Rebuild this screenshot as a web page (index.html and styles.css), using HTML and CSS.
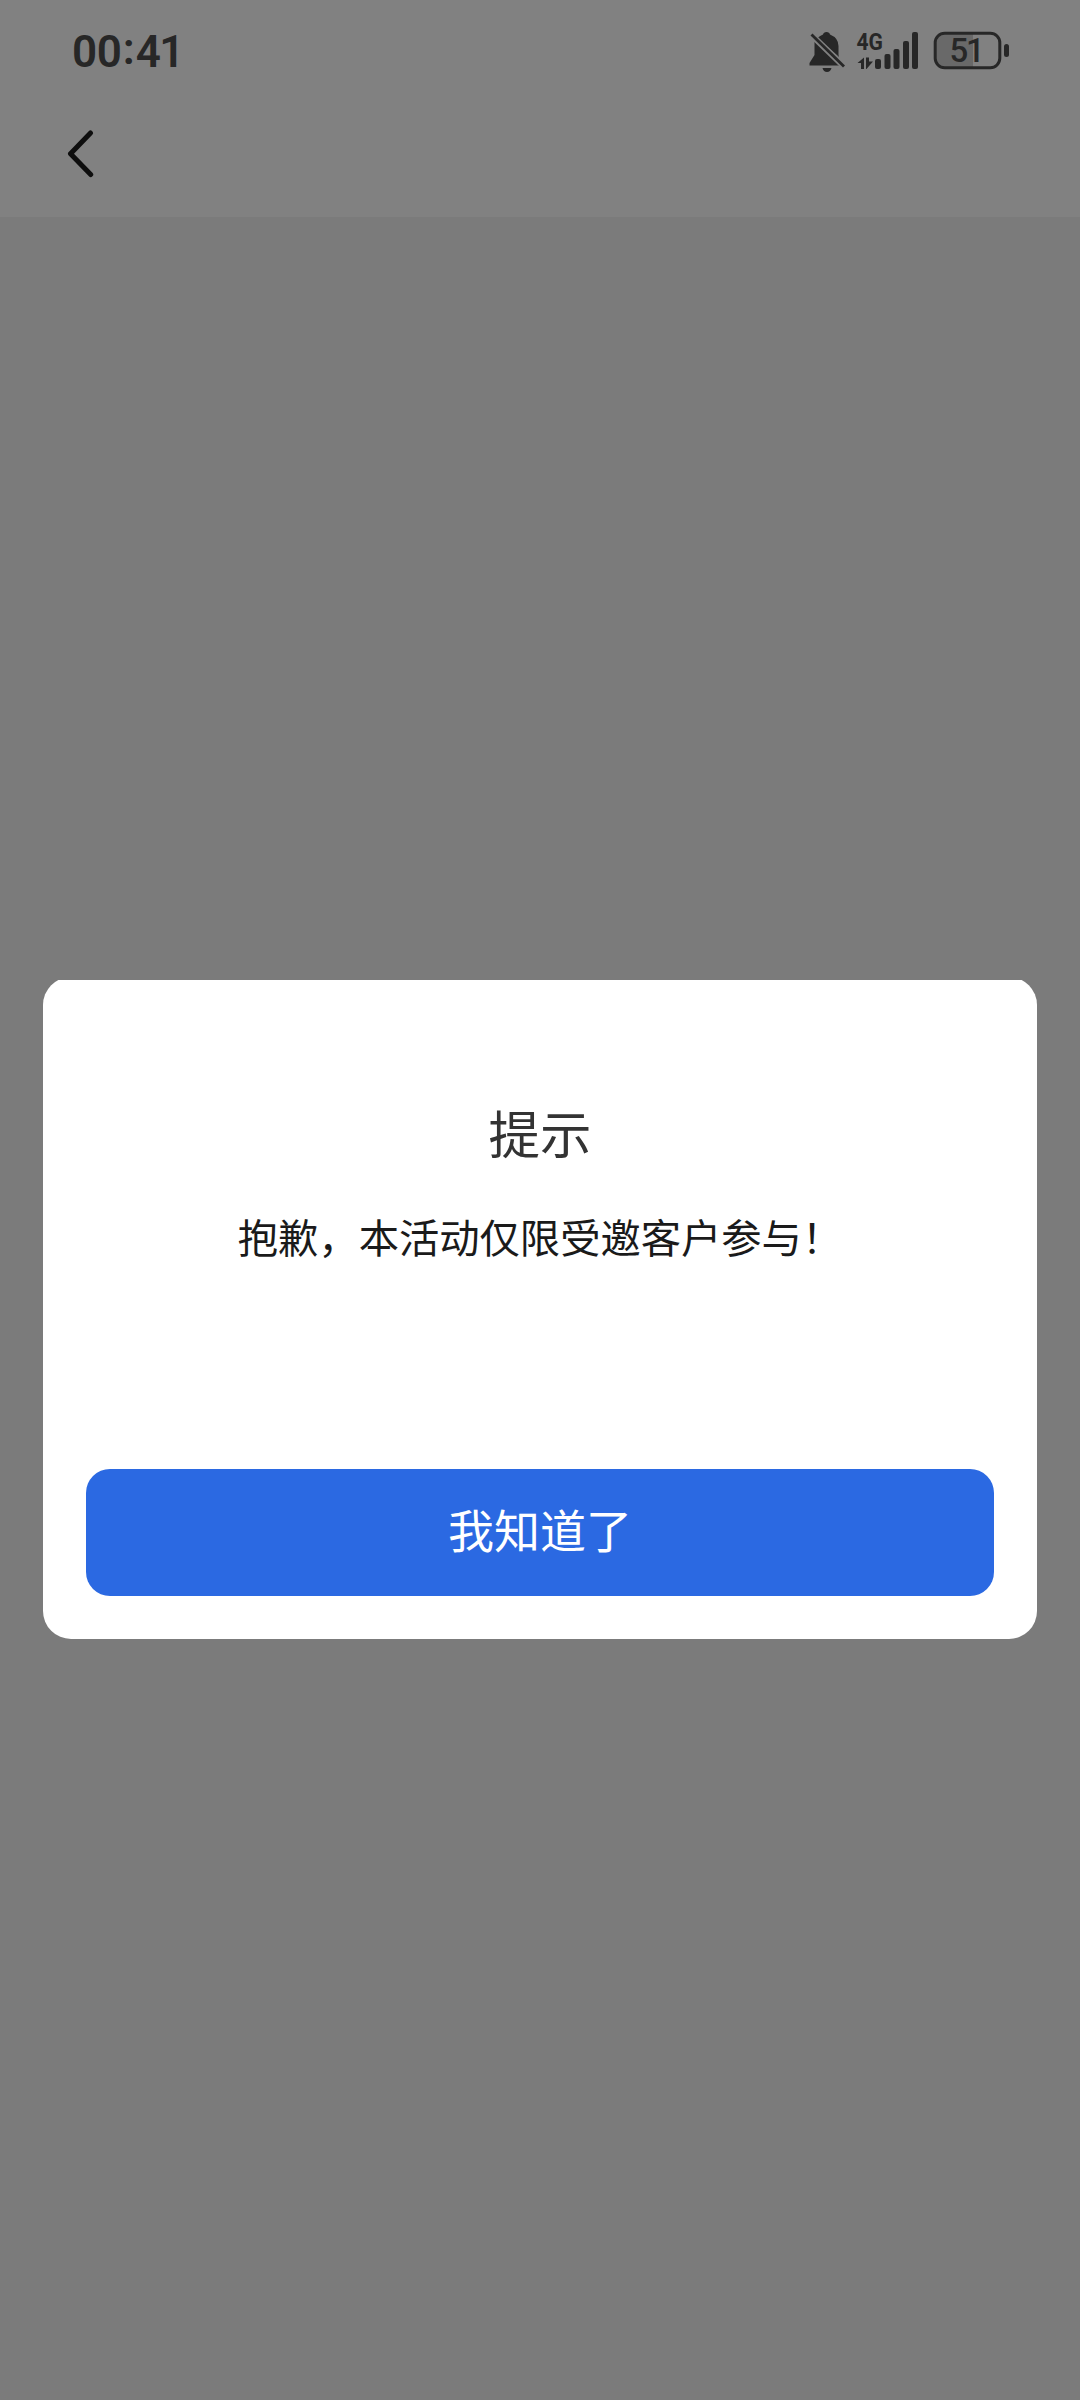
FILE: index.html
```html
<!DOCTYPE html>
<html lang="zh-CN">
<head>
<meta charset="utf-8">
<title>提示</title>
<link rel="stylesheet" href="styles.css">
</head>
<body>
<div class="screen">
  <header class="header">
    <div class="status">
      <div class="time"><span>00</span><span class="colon">:</span><span class="minutes">41</span></div>
      <svg class="status-icons" width="210" height="50" viewBox="800 25 210 50" fill="#272727">
        <path d="M809.5 65.500V63L814.500 55V41.500L839.500 65.500ZM817.500 38Q820 35.500 823 34.500Q823.500 32 826.500 32Q829.500 32 830 34.500Q838.500 38 838.500 46V55L839 57Z"/>
        <path d="M822.500 68H831.500Q830.500 72 827 72Q823.500 72 822.500 68Z"/>
        <path d="M811.500 35L843.500 66" fill="none" stroke="#818181" stroke-width="6"/>
        <path d="M811.500 34.500L844 66.500" fill="none" stroke="#272727" stroke-width="2.800"/>
        <text class="network" x="856.500" y="50" textLength="26.500" lengthAdjust="spacingAndGlyphs">4G</text>
        <path d="M857.500 63L864 57.500V69H861V63ZM866 57.500H869V61.500H873L866.500 69H866Z"/>
        <rect x="875" y="59" width="6" height="10" rx="2"/>
        <rect x="884.500" y="54" width="6" height="15" rx="2"/>
        <rect x="893.500" y="49" width="6" height="20" rx="2"/>
        <rect x="903" y="41" width="6" height="28" rx="2"/>
        <rect x="912" y="32" width="6" height="37" rx="2"/>
        <path d="M945 34H973V67H945Q936 67 936 58V43Q936 34 945 34Z" fill="#696969"/>
        <rect x="935.200" y="33.200" width="64.600" height="34.600" rx="9.500" fill="none" stroke="#272727" stroke-width="3"/>
        <rect x="1004" y="44" width="5" height="13" rx="2.500"/>
        <text class="battery" x="949.500 966" y="62.300">51</text>
      </svg>
    </div>
    <nav class="nav">
      <svg width="28" height="48" viewBox="0 0 28 48"><path d="M24.500 3L4.500 23.800L24.700 44.500" fill="none" stroke="#0e0e0e" stroke-width="5" stroke-linecap="round" stroke-linejoin="round"/></svg>
    </nav>
  </header>
  <main class="overlay">
    <div class="dialog">
      <div class="sheet">
        <h1 class="title">提示</h1>
        <p class="message">抱歉，本活动仅限受邀客户参与！</p>
        <button class="confirm">我知道了</button>
      </div>
    </div>
  </main>
</div>
</body>
</html>
```

FILE: styles.css
```css
* { box-sizing: border-box; }
body { margin: 0; font-family: "Noto Sans CJK SC", sans-serif; }
.screen {
  width: 1080px;
  height: 2400px;
  display: flex;
  flex-direction: column;
  background: #7b7b7b;
  overflow: hidden;
}
.header { height: 217px; background: #818181; }
.status {
  height: 100px;
  padding: 26px 70px 0 72px;
  display: flex;
  justify-content: space-between;
  align-items: flex-start;
}
.status-icons { margin-top: -1px; }
.time {
  display: flex;
  font: 600 44px/52px Roboto, sans-serif;
  letter-spacing: -0.3px;
  color: #272727;
}
.colon { width: 14px; text-align: center; line-height: 47px; }
.minutes { letter-spacing: -1.500px; }
.network { font: 700 24px Roboto, sans-serif; }
.battery { font: 500 33px Roboto, sans-serif; }
.nav { padding: 30px 0 0 66px; }
.nav svg { display: block; }
.overlay { padding: 763px 43px 0; }
.dialog { height: 659px; overflow: hidden; }
.sheet {
  height: 662px;
  margin-top: -3px;
  padding: 115px 43px 43px;
  display: flex;
  flex-direction: column;
  align-items: center;
  background: #fff;
  border-radius: 28px;
}
.title {
  margin: 0;
  font-size: 51.500px;
  line-height: 80px;
  font-weight: 400;
  color: #333;
}
.message {
  margin: 34px 0 0;
  font-size: 40.300px;
  line-height: 60px;
  color: #1a1a1a;
  white-space: nowrap;
}
.confirm {
  width: 100%;
  height: 127px;
  margin-top: auto;
  padding: 0 0 9px;
  border: 0;
  border-radius: 24px;
  background: #2b69e2;
  color: #fff;
  font: 400 46px/60px "Noto Sans CJK SC", sans-serif;
}
```
